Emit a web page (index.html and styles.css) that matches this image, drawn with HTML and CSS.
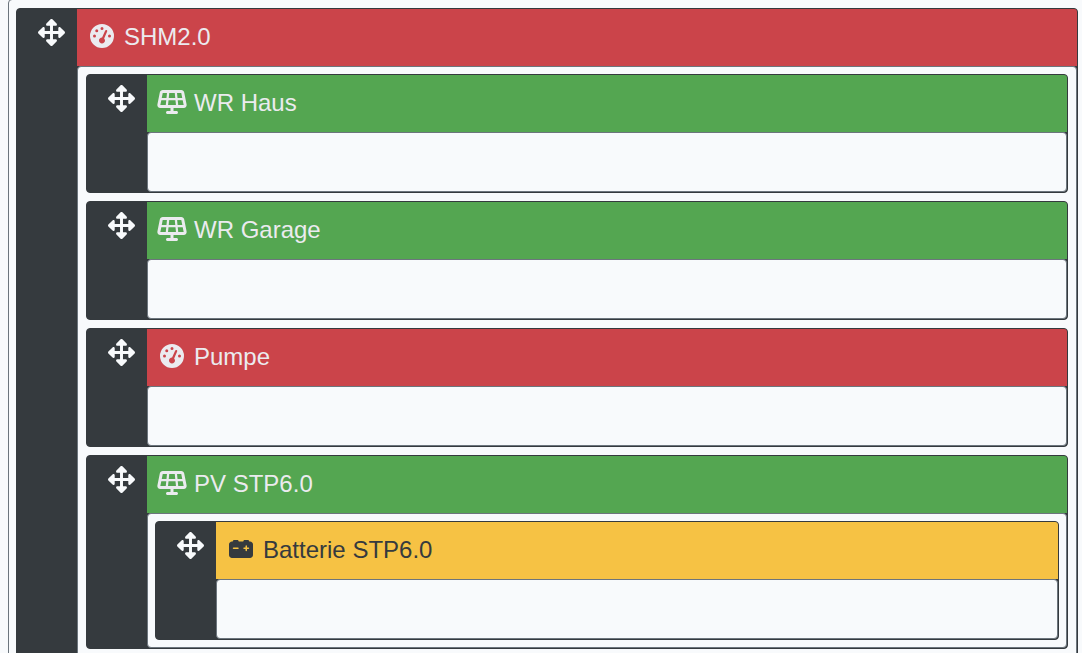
FILE: index.html
```html
<!DOCTYPE html>
<html lang="de">
<head>
  <meta charset="UTF-8">
  <meta name="viewport" content="width=device-width, initial-scale=1">
  <title>Hierarchie</title>
  <link rel="stylesheet" href="styles.css">
</head>
<body>

  <!-- Icons -->
  <svg class="sprite" aria-hidden="true">
    <symbol id="move" viewBox="0 0 512 512">
      <path d="M352.2 425.8l-79.2 79.2c-9.4 9.4-24.6 9.4-33.9 0l-79.2-79.2c-15.1-15.1-4.4-41 17-41h51.1V284H127.2v51.2c0 21.4-25.9 32.1-41 17L7 272.9c-9.4-9.4-9.4-24.6 0-33.9l79.2-79.2c15.1-15.1 41-4.4 41 17V228H228V127.2h-51.2c-21.4 0-32.1-25.9-17-41L239 7c9.4-9.4 24.6-9.4 33.9 0l79.2 79.2c15.1 15.1 4.4 41-17 41H284V228h100.8v-51.2c0-21.4 25.9-32.1 41-17L505 239c9.4 9.4 9.4 24.6 0 33.9l-79.2 79.3c-15.1 15.1-41 4.4-41-17V284H284v100.8h51.2c21.4 0 32.1 25.9 17 41z"/>
    </symbol>
    <symbol id="gauge" viewBox="0 0 512 512">
      <path d="M0 256a256 256 0 1 1 512 0A256 256 0 1 1 0 256zM288 96a32 32 0 1 0 -64 0 32 32 0 1 0 64 0zM256 416c35.3 0 64-28.7 64-64c0-17.4-6.9-33.1-18.1-44.6L366 161.7c5.3-12.1-.2-26.3-12.3-31.6s-26.3 .2-31.6 12.3L257.9 288c-.6 0-1.3 0-1.9 0c-35.3 0-64 28.7-64 64s28.7 64 64 64zM176 144a32 32 0 1 0 -64 0 32 32 0 1 0 64 0zM96 288a32 32 0 1 0 0-64 32 32 0 1 0 0 64zm352-32a32 32 0 1 0 -64 0 32 32 0 1 0 64 0z"/>
    </symbol>
    <symbol id="solar" viewBox="0 0 640 512">
      <path fill-rule="evenodd" d="M122.2 0C91.7 0 65.5 21.5 59.5 51.4L8.3 307.4C.4 347 30.6 384 71 384H288v64H224c-17.7 0-32 14.3-32 32s14.3 32 32 32H416c17.7 0 32-14.3 32-32s-14.3-32-32-32H352V384H569c40.4 0 70.7-36.9 62.8-76.6l-51.2-256C574.5 21.5 548.3 0 517.8 0H122.2zM260.9 64H379.1l10.4 104h-139L260.9 64zM202.3 168H101.4L122.2 64h90.4L202.3 168zM91.8 216H197.5L187.1 320H71L91.8 216zM245.7 216H394.3l10.4 104H235.3L245.7 216zM442.5 216H548.2L569 320H453L442.5 216zM538.6 168H437.7L427.3 64h90.4L538.6 168z"/>
    </symbol>
    <symbol id="battery" viewBox="0 0 512 512">
      <path fill-rule="evenodd" d="M80 96c0-17.7 14.3-32 32-32h64c17.7 0 32 14.3 32 32l96 0c0-17.7 14.3-32 32-32h64c17.7 0 32 14.3 32 32h16c35.3 0 64 28.7 64 64V384c0 35.3-28.7 64-64 64H64c-35.3 0-64-28.7-64-64V160c0-35.3 28.7-64 64-64l16 0zm304 96c0-8.8-7.2-16-16-16s-16 7.2-16 16v32H320c-8.8 0-16 7.2-16 16s7.2 16 16 16h32v32c0 8.8 7.2 16 16 16s16-7.2 16-16V256h32c8.8 0 16-7.2 16-16s-7.2-16-16-16H384V192zM80 240c0 8.8 7.2 16 16 16h96c8.8 0 16-7.2 16-16s-7.2-16-16-16H96c-8.8 0-16 7.2-16 16z"/>
    </symbol>
  </svg>

  <ul class="list root">
    <li class="item">
      <button class="handle" type="button" aria-label="SHM2.0 verschieben"><svg><use href="#move"/></svg></button>
      <div class="content">
        <div class="title counter"><svg class="icon"><use href="#gauge"/></svg><span>SHM2.0</span></div>
        <ul class="list wide">

          <li class="item">
            <button class="handle" type="button" aria-label="WR Haus verschieben"><svg><use href="#move"/></svg></button>
            <div class="content">
              <div class="title inverter"><svg class="icon"><use href="#solar"/></svg><span>WR Haus</span></div>
              <ul class="list"></ul>
            </div>
          </li>

          <li class="item">
            <button class="handle" type="button" aria-label="WR Garage verschieben"><svg><use href="#move"/></svg></button>
            <div class="content">
              <div class="title inverter"><svg class="icon"><use href="#solar"/></svg><span>WR Garage</span></div>
              <ul class="list"></ul>
            </div>
          </li>

          <li class="item">
            <button class="handle" type="button" aria-label="Pumpe verschieben"><svg><use href="#move"/></svg></button>
            <div class="content">
              <div class="title counter"><svg class="icon"><use href="#gauge"/></svg><span>Pumpe</span></div>
              <ul class="list"></ul>
            </div>
          </li>

          <li class="item">
            <button class="handle" type="button" aria-label="PV STP6.0 verschieben"><svg><use href="#move"/></svg></button>
            <div class="content">
              <div class="title inverter"><svg class="icon"><use href="#solar"/></svg><span>PV STP6.0</span></div>
              <ul class="list">
                <li class="item">
                  <button class="handle" type="button" aria-label="Batterie STP6.0 verschieben"><svg><use href="#move"/></svg></button>
                  <div class="content">
                    <div class="title bat"><svg class="icon"><use href="#battery"/></svg><span>Batterie STP6.0</span></div>
                    <ul class="list"></ul>
                  </div>
                </li>
              </ul>
            </div>
          </li>

        </ul>
      </div>
    </li>
  </ul>

</body>
</html>
```

FILE: styles.css
```css
* {
  box-sizing: border-box;
}
html {
  overflow: hidden;
}
body {
  margin: 0;
  background: #f8fafc;
  font-family: "Liberation Sans", Arial, sans-serif;
  font-size: 24px;
  line-height: 36px;
}
.sprite {
  display: none;
}

/* Listen */
.list {
  display: flex;
  flex-direction: column;
  gap: 8px;
  min-height: 60px;
  margin: 0;
  padding: 7px;
  list-style: none;
  background: #f8fafc;
  border: 1px solid #6c757d;
  border-radius: 4px;
}
.list.wide {
  padding: 7px 8px;
}
.list.root {
  margin: -1px -4px 0 8px;
  padding: 8px 7px;
}

/* Eintrag mit Griff links */
.item {
  display: flex;
  background: #353a3e;
  border: 1px solid #353a3e;
  border-radius: 4px;
}
.handle {
  display: flex;
  align-items: flex-start;
  flex: none;
  width: 60px;
  padding: 10px 12px 10px 21px;
  color: #f8fafc;
  background: none;
  border: none;
  cursor: move;
}
.handle svg {
  width: 27px;
  height: 27px;
  fill: currentColor;
}
.content {
  flex: 1;
  min-width: 0;
}

/* Titelzeile */
.title {
  display: flex;
  align-items: center;
  gap: 7px;
  padding: 10px 10px 11px;
  color: #ebebef;
  border-top-right-radius: 3px;
}
.icon {
  flex: none;
  width: 30px;
  height: 24px;
  margin-bottom: 2px;
  fill: currentColor;
}
.counter {
  background: #cb444a;
}
.inverter {
  background: #54a651;
}
.bat {
  color: #353a3e;
  background: #f6c244;
}
```
